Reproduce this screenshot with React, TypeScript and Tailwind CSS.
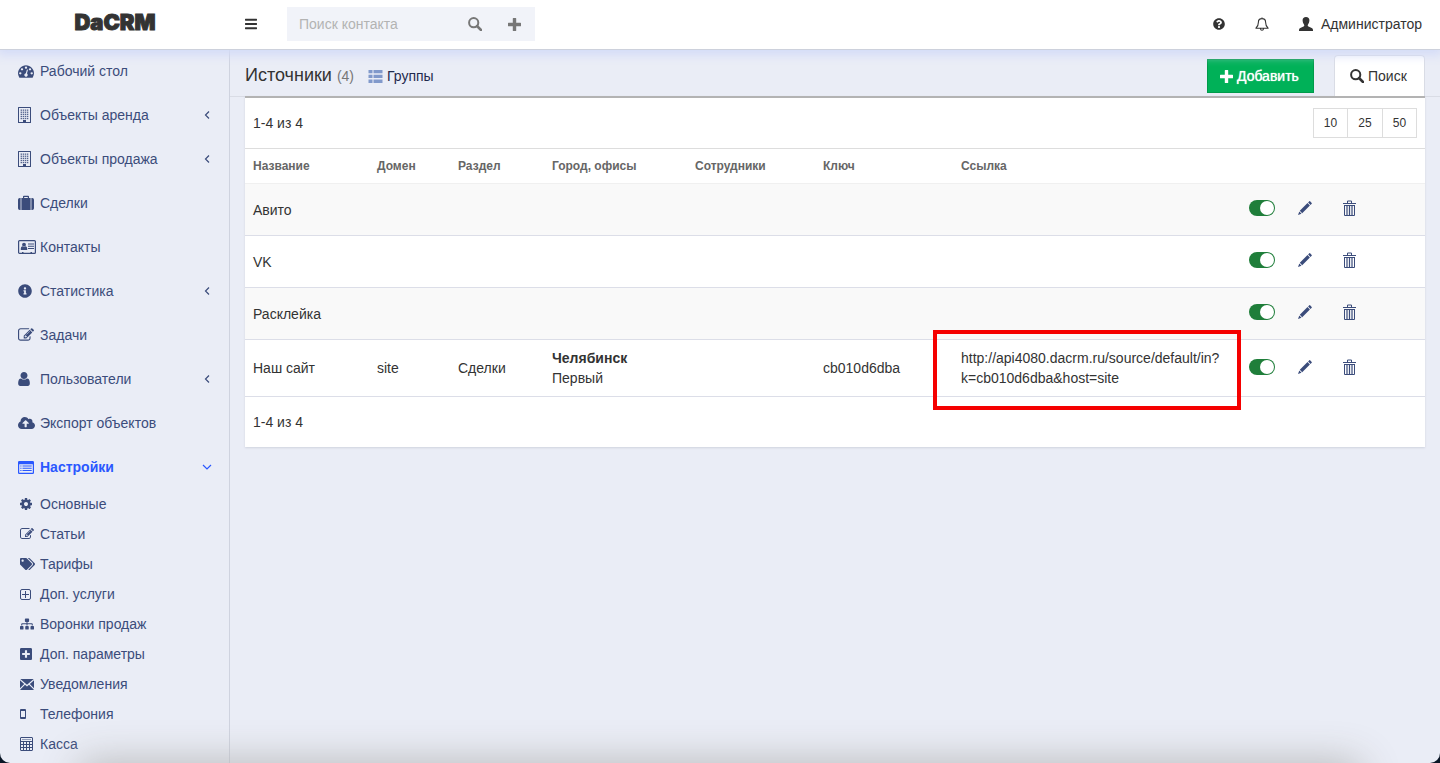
import type { ReactNode } from "react";
import { FaBars, FaCloudUploadAlt, FaInfoCircle, FaPlusSquare, FaQuestionCircle, FaSitemap, FaTags } from "react-icons/fa";

interface IconProps {
  className?: string;
}

interface MenuItem {
  label: string;
  icon: ReactNode;
  open?: boolean;
  nested?: boolean;
}

interface Source {
  name: string;
  domain?: string;
  section?: string;
  city?: string;
  office?: string;
  apiKey?: string;
  link?: string;
}

const TachometerIcon = ({ className }: IconProps) => (
  <svg viewBox="0 0 1792 1792" fill="currentColor" className={className}>
    <path d="M384 1152q0-53-37.5-90.5t-90.5-37.5-90.5 37.5-37.5 90.5 37.5 90.5 90.5 37.5 90.5-37.5 37.5-90.5zm192-448q0-53-37.5-90.5t-90.5-37.5-90.5 37.5-37.5 90.5 37.5 90.5 90.5 37.5 90.5-37.5 37.5-90.5zm428 481l101-382q6-26-7.5-48.5t-38.5-29.5-48 6.5-30 39.5l-101 382q-60 5-107 43.5t-63 98.5q-20 77 20 146t117 89 146-20 89-117q16-60-6-117t-72-91zm660-33q0-53-37.5-90.5t-90.5-37.5-90.5 37.5-37.5 90.5 37.5 90.5 90.5 37.5 90.5-37.5 37.5-90.5zm-640-640q0-53-37.5-90.5t-90.5-37.5-90.5 37.5-37.5 90.5 37.5 90.5 90.5 37.5 90.5-37.5 37.5-90.5zm448 192q0-53-37.5-90.5t-90.5-37.5-90.5 37.5-37.5 90.5 37.5 90.5 90.5 37.5 90.5-37.5 37.5-90.5zm320 448q0 261-141 483-19 29-54 29h-1402q-35 0-54-29-141-221-141-483 0-182 71-348t191-286 286-191 348-71 348 71 286 191 191 286 71 348z" />
  </svg>
);

const BuildingIcon = ({ className }: IconProps) => (
  <svg viewBox="0 0 13 16" fill="currentColor" className={className}>
    <path fillRule="evenodd" d="M.5 0h12q.5 0 .5.5v15q0 .5-.5.5H.5q-.5 0-.5-.5V.5Q0 0 .5 0zM1 1v14h4v-2h3v2h4V1z" />
    {[2.5, 4.6, 6.7, 8.8, 10.9].map((y) =>
      [2.6, 4.7, 6.8, 8.9].map((x) => <rect key={`${x}-${y}`} x={x} y={y} width="1.4" height="1.3" opacity=".85" />)
    )}
  </svg>
);

const SuitcaseIcon = ({ className }: IconProps) => (
  <svg viewBox="0 0 16 16" fill="currentColor" className={className}>
    <path d="M5 3V1.6Q5 .7 5.9.7h4.2q.9 0 .9.9V3h1.6v12H3.4V3zm1.2 0h3.6V1.9H6.2z" />
    <path d="M2.6 3v12h-.9Q0 15 0 13.3V4.7Q0 3 1.7 3zM13.4 3h.9Q16 3 16 4.7v8.600q0 1.700-1.700 1.700h-.9z" />
  </svg>
);

const IdCardIcon = ({ className }: IconProps) => (
  <svg viewBox="0 0 18 14" fill="currentColor" className={className}>
    <rect x=".6" y=".6" width="16.8" height="12.8" rx="1" fill="none" stroke="currentColor" strokeWidth="1.2" />
    <circle cx="6" cy="4.7" r="1.9" />
    <path d="M2.8 10V8.500Q2.800 6.600 4.400 6.300q1.600 1 3.200 0Q9.200 6.600 9.200 8.500V10zM10 3.500h6v1h-6zm0 2.200h6v1h-6zm0 2.200h6v1h-6zM4 12h1.500v1.500H4zm8.500 0H14v1.500h-1.500z" />
  </svg>
);

const EditIcon = ({ className }: IconProps) => (
  <svg viewBox="0 0 1792 1792" fill="currentColor" className={className}>
    <path d="M888 1184l116-116-152-152-116 116v56h96v96h56zm440-720q-16-16-33 1l-350 350q-17 17-1 33t33-1l350-350q17-17 1-33zm80 594v190q0 119-84.5 203.5t-203.5 84.5h-832q-119 0-203.5-84.5t-84.5-203.5v-832q0-119 84.5-203.5t203.5-84.5h832q63 0 117 25 15 7 18 23 3 17-9 29l-49 49q-14 14-32 8-23-6-45-6h-832q-66 0-113 47t-47 113v832q0 66 47 113t113 47h832q66 0 113-47t47-113v-126q0-13 9-22l64-64q15-15 35-7t20 29zm-96-738l288 288-672 672h-288v-288zm444 132l-92 92-288-288 92-92q28-28 68-28t68 28l152 152q28 28 28 68t-28 68z" />
  </svg>
);

const UserIcon = ({ className }: IconProps) => (
  <svg viewBox="256 128 1280 1536" fill="currentColor" className={className}>
    <path d="M1536 1399q0 109-62.5 187t-150.5 78h-854q-88 0-150.5-78t-62.5-187q0-85 8.5-160.5t31.5-152 58.5-131 94-89 134.5-34.5q131 128 313 128t313-128q76 0 134.5 34.5t94 89 58.5 131 31.5 152 8.5 160.5zm-256-887q0 159-112.5 271.5t-271.5 112.5-271.5-112.5-112.5-271.5 112.5-271.5 271.5-112.5 271.5 112.5 112.5 271.5z" />
  </svg>
);

const ListAltIcon = ({ className }: IconProps) => (
  <svg viewBox="0 0 16 13" fill="currentColor" className={className}>
    <path fillRule="evenodd" d="M1.300 0h13.400Q16 0 16 1.300v10.400q0 1.300-1.300 1.300H1.300Q0 13 0 11.700V1.300Q0 0 1.300 0zM1.200 3.200v8.200q0 .4.4.4h12.800q.4 0 .4-.4V3.200z" />
    <path d="M2.300 4.400h1.200v1.100H2.300zm0 2.300h1.200v1.100H2.300zm0 2.300h1.200v1.100H2.300zM4.500 4.400h9.200v1.100H4.500zm0 2.300h9.200v1.100H4.500zm0 2.300h9.200v1.100H4.500z" />
  </svg>
);

const CogIcon = ({ className }: IconProps) => (
  <svg viewBox="128 128 1536 1536" fill="currentColor" className={className}>
    <path d="M1152 896q0-106-75-181t-181-75-181 75-75 181 75 181 181 75 181-75 75-181zm512-109v222q0 12-8 23t-20 13l-185 28q-19 54-39 91 35 50 107 138 10 12 10 25t-9 23q-27 37-99 108t-94 71q-12 0-26-9l-138-108q-44 23-91 38-16 136-29 186-7 28-36 28h-222q-14 0-24.5-8.5t-11.5-21.5l-28-184q-49-16-90-37l-141 107q-10 9-25 9-14 0-25-11-126-114-165-168-7-10-7-23 0-12 8-23 15-21 51-66.5t54-70.5q-27-50-41-99l-183-27q-13-2-21-12.5t-8-23.5v-222q0-12 8-23t19-13l186-28q14-46 39-92-40-57-107-138-10-12-10-24 0-10 9-23 26-36 98.5-107.5t94.5-71.5q13 0 26 10l138 107q44-23 91-38 16-136 29-186 7-28 36-28h222q14 0 24.5 8.5t11.5 21.5l28 184q49 16 90 37l142-107q9-9 24-9 13 0 25 10 129 119 165 170 7 8 7 22 0 12-8 23-15 21-51 66.5t-54 70.5q26 50 41 98l183 28q13 2 21 12.5t8 23.5z" />
  </svg>
);

const PlusSquareOutlineIcon = ({ className }: IconProps) => (
  <svg viewBox="0 0 11 11" fill="none" stroke="currentColor" className={className}>
    <rect x=".5" y=".5" width="10" height="10" rx="1.5" />
    <path d="M5.5 2v7M2 5.500h7" />
  </svg>
);

const EnvelopeIcon = ({ className }: IconProps) => (
  <svg viewBox="0 0 14 11" fill="currentColor" className={className}>
    <path d="M.3 0h13.400L7 5.700zM0 1.200l4.200 3.900L0 9.300zM14 1.200v8.100L9.800 5.100zM5 5.800l2 1.700 2-1.700 4.700 4.700V11H.3v-.5z" />
  </svg>
);

const PhoneIcon = ({ className }: IconProps) => (
  <svg viewBox="0 0 6 10" fill="currentColor" className={className}>
    <path fillRule="evenodd" d="M1 0h4q1 0 1 1v8q0 1-1 1H1Q0 10 0 9V1q0-1 1-1zm0 2v6h4V2z" />
  </svg>
);

const CalculatorIcon = ({ className }: IconProps) => (
  <svg viewBox="0 0 13 14" fill="none" stroke="currentColor" className={className}>
    <rect x=".5" y=".5" width="12" height="13" rx=".5" />
    <path d="M.5 4.500h12M1 7.500h11.500M1 10.500h11.500M3.500 4.500v9M6.500 4.500v9M9.500 4.500v9" />
    <path d="M2 2.500h9" strokeWidth=".5" />
  </svg>
);

const SearchIcon = ({ className }: IconProps) => (
  <svg viewBox="0 0 14 14" fill="none" stroke="currentColor" strokeWidth="2" className={className}>
    <circle cx="5.7" cy="5.7" r="4.6" />
    <path d="M9 9l4 4" strokeWidth="2.5" strokeLinecap="round" />
  </svg>
);

const PlusIcon = ({ className }: IconProps) => (
  <svg viewBox="0 0 13 13" fill="currentColor" className={className}>
    <path d="M5.300 0h2.400q.5 0 .5.5v4.300h4.300q.5 0 .5.5v2.400q0 .5-.5.5H8.200v4.300q0 .5-.5.5H5.300q-.5 0-.5-.5V8.200H.5Q0 8.200 0 7.700V5.300q0-.5.5-.5h4.300V.5q0-.5.5-.5z" />
  </svg>
);

const BellIcon = ({ className }: IconProps) => (
  <svg viewBox="0 0 14 14" fill="none" stroke="currentColor" strokeWidth="1.1" strokeLinejoin="round" className={className}>
    <path d="M7 .4v1.200M7 1.600C4.600 1.600 3.400 3.200 3.400 5.200 3.400 8.300 2.500 9.900.9 11.200h12.200c-1.600-1.300-2.500-2.900-2.500-6 0-2-1.200-3.600-3.600-3.600zM5.400 11.500q.2 1.800 1.600 1.800t1.600-1.800" />
  </svg>
);

const PersonIcon = ({ className }: IconProps) => (
  <svg viewBox="0 0 14 14" fill="currentColor" className={className}>
    <path d="M7 0C4.800 0 3.500 1.400 3.600 3.600c.1 1.900.8 3.200 1.500 4.100.4.800.1 1.500-.6 1.800L1.300 11Q0 11.700 0 13v1h14v-1q0-1.300-1.300-2L9.500 9.500c-.7-.3-1-1-.6-1.800.7-.9 1.400-2.200 1.500-4.100C10.500 1.400 9.200 0 7 0z" />
  </svg>
);

const GroupsIcon = ({ className }: IconProps) => (
  <svg viewBox="0 0 14 13" fill="currentColor" className={className}>
    <path d="M0 0h4v3.300H0zM5 0h9v3.300H5zM0 4.800h4v3.300H0zM5 4.800h9v3.300H5zM0 9.600h4v3.300H0zM5 9.600h9v3.300H5z" />
  </svg>
);

const PencilIcon = ({ className }: IconProps) => (
  <svg viewBox="0 0 14 14" fill="currentColor" className={className}>
    <path d="M11.300.3q.4-.4.8 0l1.600 1.600q.4.4 0 .8L12.500 3.900 10.100 1.500zM9.500 2.100l2.400 2.400-7.700 7.700-2.400-2.400zM1.300 10.500l2.200 2.200L0 14z" />
  </svg>
);

const TrashIcon = ({ className }: IconProps) => (
  <svg viewBox="0 0 13 16" fill="none" stroke="currentColor" className={className}>
    <path d="M4.500 3V1h4v2" />
    <path d="M0 3.500h13M1.500 5v10.500h10V5M1.500 5.500h10" />
    <path d="M4 6v9M6.500 6v9M9 6v9" strokeWidth="1.2" />
  </svg>
);

const AngleIcon = ({ open }: { open: boolean }) => (
  <svg viewBox="0 0 10 10" fill="none" stroke="currentColor" strokeWidth="1.2" className="size-2.5">
    <path d={open ? "M1 3l4 4 4-4" : "M7 1.500L3.500 5 7 8.500"} />
  </svg>
);

const menu: MenuItem[] = [
  { label: "Рабочий стол", icon: <TachometerIcon className="size-4" /> },
  { label: "Объекты аренда", icon: <BuildingIcon className="h-4 w-[13px]" />, nested: true },
  { label: "Объекты продажа", icon: <BuildingIcon className="h-4 w-[13px]" />, nested: true },
  { label: "Сделки", icon: <SuitcaseIcon className="size-4" /> },
  { label: "Контакты", icon: <IdCardIcon className="h-3.5 w-[18px]" /> },
  { label: "Статистика", icon: <FaInfoCircle className="size-3.5" />, nested: true },
  { label: "Задачи", icon: <EditIcon className="size-4" /> },
  { label: "Пользователи", icon: <UserIcon className="h-3.5 w-3" />, nested: true },
  { label: "Экспорт объектов", icon: <FaCloudUploadAlt className="h-3.5 w-[17px]" /> },
  { label: "Настройки", icon: <ListAltIcon className="h-[13px] w-4" />, nested: true, open: true },
];

const settings: MenuItem[] = [
  { label: "Основные", icon: <CogIcon className="size-3" /> },
  { label: "Статьи", icon: <EditIcon className="size-3.5" /> },
  { label: "Тарифы", icon: <FaTags className="h-3 w-[15px]" /> },
  { label: "Доп. услуги", icon: <PlusSquareOutlineIcon className="size-[11px]" /> },
  { label: "Воронки продаж", icon: <FaSitemap className="h-3 w-3.5" /> },
  { label: "Доп. параметры", icon: <FaPlusSquare className="h-3.5 w-3" /> },
  { label: "Уведомления", icon: <EnvelopeIcon className="h-[11px] w-3.5" /> },
  { label: "Телефония", icon: <PhoneIcon className="h-2.5 w-1.5" /> },
  { label: "Касса", icon: <CalculatorIcon className="h-3.5 w-[13px]" /> },
];

const sources: Source[] = [
  { name: "Авито" },
  { name: "VK" },
  { name: "Расклейка" },
  {
    name: "Наш сайт",
    domain: "site",
    section: "Сделки",
    city: "Челябинск",
    office: "Первый",
    apiKey: "cb010d6dba",
    link: "http://api4080.dacrm.ru/source/default/in?k=cb010d6dba&host=site",
  },
];

function Header() {
  return (
    <header className="relative z-10 flex h-[50px] shrink-0 items-center border-b border-[#cdd1dc] bg-white pb-px text-[#333] shadow-[0_2px_10px_3px_#d3dbf7]">
      <div className="w-[230px] shrink-0 pb-1 text-center">
        <a href="#" className="font-['Inter'] text-[22px] leading-10 font-black [-webkit-text-stroke:1px]">
          DaCRM
        </a>
      </div>
      <button type="button" aria-label="Меню" className="ml-[15px]">
        <FaBars className="h-3.5 w-3" />
      </button>
      <form className="ml-[30px] flex h-[34px] w-[248px] items-center bg-[#f1f3f9] text-[#777]">
        <input
          type="text"
          aria-label="Поиск контакта"
          placeholder="Поиск контакта"
          className="h-full w-[168px] bg-transparent px-3 text-sm outline-none placeholder:text-[#b3b3b3]"
        />
        <button type="button" aria-label="Найти" className="flex w-10 justify-center">
          <SearchIcon className="size-3.5" />
        </button>
        <button type="button" aria-label="Добавить контакт" className="flex w-[38px] justify-center">
          <PlusIcon className="size-[13px]" />
        </button>
      </form>
      <div className="ml-auto flex items-center pr-[18px]">
        <button type="button" aria-label="Помощь">
          <FaQuestionCircle className="size-3" />
        </button>
        <button type="button" aria-label="Уведомления" className="ml-[30px]">
          <BellIcon className="size-3.5" />
        </button>
        <a href="#" className="ml-[30px] flex items-center gap-2">
          <PersonIcon className="size-3.5" />
          Администратор
        </a>
      </div>
    </header>
  );
}

function Sidebar() {
  return (
    <nav className="-mt-px w-[230px] shrink-0 border-r border-[#cfd3df] text-[#3b4c7b]">
      <ul>
        {menu.map((item) => (
          <li key={item.label}>
            <a
              href="#"
              className={`flex h-11 items-center pr-[17px] pl-[18px] ${item.open ? "font-bold text-[#2a58ff]" : ""}`}
            >
              <span className="w-[22px] shrink-0">{item.icon}</span>
              {item.label}
              {item.nested && (
                <span className="ml-auto">
                  <AngleIcon open={!!item.open} />
                </span>
              )}
            </a>
          </li>
        ))}
      </ul>
      <ul>
        {settings.map((item) => (
          <li key={item.label}>
            <a href="#" className="flex h-[30px] items-center pl-5">
              <span className="w-5 shrink-0">{item.icon}</span>
              {item.label}
            </a>
          </li>
        ))}
      </ul>
    </nav>
  );
}

function SourceRow({ source }: { source: Source }) {
  return (
    <tr className="h-[52px] border-b border-[#dcdee8] odd:bg-[#f9f9f9]">
      <td className="px-2 pt-px">{source.name}</td>
      <td className="px-2">{source.domain}</td>
      <td className="px-2">{source.section}</td>
      <td className="px-2">
        {source.city && (
          <div className="py-2">
            <b>{source.city}</b>
            <br />
            {source.office}
          </div>
        )}
      </td>
      <td className="px-2"></td>
      <td className="px-2">{source.apiKey}</td>
      <td className="relative px-2">
        {source.link}
        {source.link && <div className="absolute -top-2.5 right-0 -bottom-3.5 -left-5 border-4 border-[#f50000]"></div>}
      </td>
      <td className="pb-0.5 pl-2">
        <input
          type="checkbox"
          defaultChecked
          aria-label={`Источник ${source.name} включён`}
          className="flex h-4 w-[26px] appearance-none items-center rounded-full bg-[#1f7e3a] px-px before:size-3.5 before:rounded-full before:bg-white checked:justify-end"
        />
      </td>
      <td className="pb-0.5 pl-2">
        <button type="button" aria-label="Редактировать" className="block text-[#3b4c7b]">
          <PencilIcon className="size-3.5" />
        </button>
      </td>
      <td className="pb-0.5 pl-2">
        <button type="button" aria-label="Удалить" className="block text-[#3b4c7b]">
          <TrashIcon className="h-4 w-[13px]" />
        </button>
      </td>
    </tr>
  );
}

export default function App() {
  return (
    <div className="bg-[#0a1626] font-['Liberation_Sans',Arial,sans-serif] text-sm text-[#333]">
      <div className="relative flex min-h-screen flex-col overflow-hidden rounded-b-[10px] bg-[#eaedf6]">
        <Header />
        <div className="flex flex-1">
          <Sidebar />
          <main className="min-w-0 flex-1">
            <div className="flex h-[47px] justify-between border-b border-[#d9dce5] px-[15px]">
              <div className="flex items-center pt-1">
                <h1 className="text-lg leading-5">
                  Источники <span className="text-sm text-[#777]">(4)</span>
                </h1>
                <a href="#" className="ml-3.5 flex items-center gap-1 pt-0.5 text-[#1f2a4d]">
                  <GroupsIcon className="h-[13px] w-[15px] text-[#8199cb]" />
                  Группы
                </a>
              </div>
              <div className="flex items-end">
                <button
                  type="button"
                  className="mr-5 mb-[3px] flex h-[34px] w-[107px] items-center gap-1 border border-[#009b4a] bg-[#00b158] px-3 text-white [text-shadow:0_0_1px_white]"
                >
                  <PlusIcon className="size-[13px]" />
                  Добавить
                </button>
                <button
                  type="button"
                  className="flex h-[41px] w-[91px] items-center gap-1 rounded-t border border-b-0 border-[#d9dce5] bg-white px-[15px]"
                >
                  <SearchIcon className="size-3.5" />
                  Поиск
                </button>
              </div>
            </div>
            <section className="-mt-px mr-[15px] ml-[15px] border-t-2 border-[#b3b3b3] bg-white shadow-[0_1px_2px_#cfd3de]">
              <div className="flex h-[51px] items-center justify-between border-b border-[#ddd] px-2">
                <span>1-4 из 4</span>
                <div className="flex divide-x divide-[#ddd] border border-[#ddd] text-xs">
                  <button type="button" className="h-7 w-[34px]">10</button>
                  <button type="button" className="h-7 w-[35px]">25</button>
                  <button type="button" className="h-7 w-[33px]">50</button>
                </div>
              </div>
              <table className="w-full table-fixed text-left">
                <colgroup>
                  <col className="w-[124px]" />
                  <col className="w-[81px]" />
                  <col className="w-[94px]" />
                  <col className="w-[143px]" />
                  <col className="w-32" />
                  <col className="w-[138px]" />
                  <col className="w-72" />
                  <col className="w-[49px]" />
                  <col className="w-[45px]" />
                  <col />
                </colgroup>
                <thead>
                  <tr className="h-[34px] border-b border-[#f0f0f0] text-xs text-[#666]">
                    <th className="px-2">Название</th>
                    <th className="px-2">Домен</th>
                    <th className="px-2">Раздел</th>
                    <th className="px-2">Город, офисы</th>
                    <th className="px-2">Сотрудники</th>
                    <th className="px-2">Ключ</th>
                    <th className="px-2">Ссылка</th>
                    <th></th>
                    <th></th>
                    <th></th>
                  </tr>
                </thead>
                <tbody>
                  {sources.map((source) => (
                    <SourceRow key={source.name} source={source} />
                  ))}
                </tbody>
              </table>
              <div className="flex h-[50px] items-center px-2">1-4 из 4</div>
            </section>
          </main>
        </div>
        {/* soft shade along the bottom edge of the window */}
        <div className="pointer-events-none absolute inset-x-20 -bottom-10 h-10 shadow-[0_0_40px_#b5b5b5]"></div>
      </div>
    </div>
  );
}
